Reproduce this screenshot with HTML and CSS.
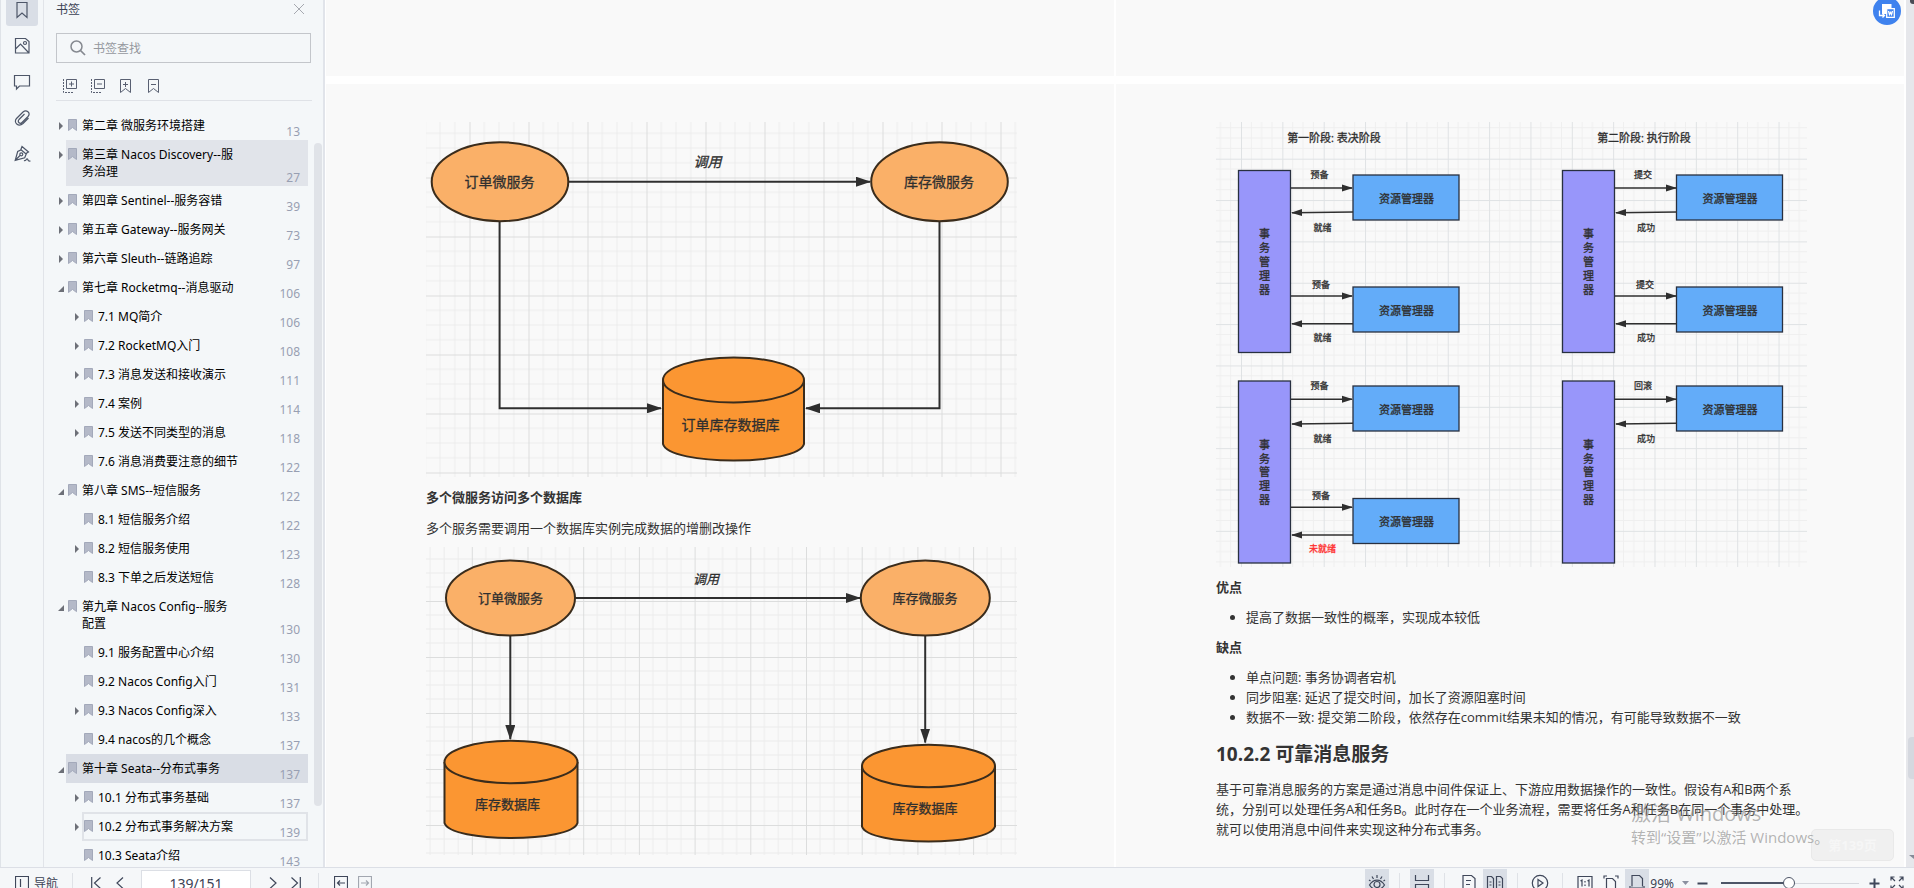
FILE: index.html
```html
<!DOCTYPE html>
<html lang="zh-CN">
<head>
<meta charset="utf-8">
<title>文档阅读器</title>
<link rel="stylesheet" href="styles.css">
</head>
<body>
<svg class="defs" aria-hidden="true">
  <defs>
    <symbol id="mark" viewBox="0 0 9 12"><path d="M.5.5h8v11L4.500 8.500.5 11.500z" fill="#b4b9c8" stroke="#a3a9ba"/></symbol>
    <symbol id="closed" viewBox="0 0 10 10"><path d="M3 1l4 4-4 4z" fill="#6d7078"/></symbol>
    <symbol id="open" viewBox="0 0 10 10"><path d="M8 3v6H2z" fill="#6d7078"/></symbol>
    <marker id="head" markerUnits="userSpaceOnUse" markerWidth="15" markerHeight="10" refX="14" refY="5" orient="auto"><path d="M0 0l15 5-15 5z" fill="#2f2f2f"/></marker>
    <marker id="head-s" markerUnits="userSpaceOnUse" markerWidth="11" markerHeight="8" refX="10" refY="4" orient="auto"><path d="M0 .5l11 3.500-11 3.500z" fill="#2f2f2f"/></marker>
    <pattern id="grid59" x="469.5" y="177.500" width="59" height="59" patternUnits="userSpaceOnUse"><path d="M14.750 0v59M29.500 0v59M44.250 0v59M0 14.750h59M0 29.500h59M0 44.250h59" stroke="#ececec"/><path d="M.5 0v59M0 .5h59" stroke="#dcdddd"/></pattern>
    <pattern id="grid56" x="527.500" y="601" width="55.700" height="56" patternUnits="userSpaceOnUse"><path d="M14 0v56M28 0v56M42 0v56M0 14h56M0 28h56M0 42h56" stroke="#ececec"/><path d="M.5 0v56M0 .5h56" stroke="#dcdddd"/></pattern>
    <pattern id="grid41" x="1241" y="158.700" width="41.350" height="41.350" patternUnits="userSpaceOnUse"><path d="M10.340 0v42M20.680 0v42M31 0v42M0 10.340h42M0 20.680h42M0 31h42" stroke="#efefef"/><path d="M.5 0v42M0 .5h42" stroke="#dfe2e4"/></pattern>
    <g id="manager"><rect x="1238.500" y="170.500" width="52" height="182"/><text x="1264.500" y="233.500">事</text><text x="1264.500" y="247.500">务</text><text x="1264.500" y="261">管</text><text x="1264.500" y="275">理</text><text x="1264.500" y="289">器</text></g>
    <g id="resource"><rect x="1353" y="175" width="106" height="45"/><text x="1406.500" y="198">资源管理器</text></g>
    <g id="exchange-a"><path d="M1291 188h61"/><path d="M1353 212l-61 .7"/></g>
    <g id="exchange-b"><path d="M1291 296h61"/><path d="M1353 323.700h-61"/></g>
  </defs>
</svg>
<div class="app">
  <div class="workspace">
    <nav class="rail" aria-label="面板">
      <button class="rail-btn active" aria-label="书签"><svg width="18" height="20" viewBox="0 0 18 20"><path d="M4 2.500h10v15l-5-4.500-5 4.500z"/></svg></button>
      <button class="rail-btn" aria-label="缩略图"><svg width="18" height="18" viewBox="0 0 18 18"><path d="M2.500 1.500h10l3.500 3v11.500H2.500zM2.500 12l5-5 8 8.500"/><circle cx="12" cy="6" r="1.500"/></svg></button>
      <button class="rail-btn" aria-label="批注"><svg width="18" height="18" viewBox="0 0 18 18"><path d="M1.500 2.500h15v10.500H6.500L3.500 16v-3h-2z"/></svg></button>
      <button class="rail-btn" aria-label="附件"><svg width="18" height="18" viewBox="0 0 18 18"><path d="M15.500 9L10 14.500c-4.500 4-10-1-6.500-5L10 3c3.500-3 8 1 5 4.500l-6 6c-2 2-5-.5-3-3L11.500 5"/></svg></button>
      <button class="rail-btn" aria-label="签名"><svg width="18" height="18" viewBox="0 0 18 18"><path d="M9 1.500l6.500 5.500-2 1.200-1.800 4.600-9.500 2.500L4.700 6.500l3-1.500zM2.500 15l4.500-4.500M7.700 4.500l6 5M11 15.500c2 1 2-2 3.500-1.500 1 .5-.5 2.500 3 2"/><circle cx="8.300" cy="9.300" r="1.500"/></svg></button>
    </nav>
    <aside class="panel">
      <header class="panel-head"><h2>书签</h2><button aria-label="关闭"><svg width="12" height="12" viewBox="0 0 12 12"><path d="M1 1l10 10M11 1L1 11" stroke="#a6a9b0"/></svg></button></header>
      <label class="search"><svg width="16" height="16" viewBox="0 0 16 16"><circle cx="6.500" cy="6.500" r="5.500" stroke="#858990" stroke-width="1.500"/><path d="M10.500 10.500l4.500 4.500" stroke="#858990" stroke-width="1.700"/></svg><input type="text" placeholder="书签查找" aria-label="书签查找"></label>
      <div class="tools">
        <button aria-label="展开"><svg width="16" height="16" viewBox="0 0 16 16"><path d="M4.500 1.500h10v9h-10zM9.500 3.500v5M7 6h5"/><path d="M1.500 1v13.500H11" stroke-dasharray="2 1"/></svg></button>
        <button aria-label="折叠"><svg width="16" height="16" viewBox="0 0 16 16"><path d="M4.500 1.500h10v9h-10zM7 6h5"/><path d="M1.500 1v13.500H11" stroke-dasharray="2 1"/></svg></button>
        <button aria-label="添加书签"><svg width="16" height="16" viewBox="0 0 16 16"><path d="M2.500 1.500h10v13l-5-4-5 4zM7.500 4v5M5 6.500h5"/></svg></button>
        <button aria-label="删除书签"><svg width="16" height="16" viewBox="0 0 16 16"><path d="M2.500 1.500h10v13l-5-4-5 4zM5 6.500h5"/></svg></button>
      </div>
      <div class="tree-wrap">
      <ul class="tree">
        <li><svg class="tw"><use href="#closed"/></svg><a href="#"><svg class="bm"><use href="#mark"/></svg><span>第二章 微服务环境搭建</span><i>13</i></a></li>
        <li><svg class="tw"><use href="#closed"/></svg><a class="hover" href="#"><svg class="bm"><use href="#mark"/></svg><span>第三章 Nacos Discovery--服务治理</span><i>27</i></a></li>
        <li><svg class="tw"><use href="#closed"/></svg><a href="#"><svg class="bm"><use href="#mark"/></svg><span>第四章 Sentinel--服务容错</span><i>39</i></a></li>
        <li><svg class="tw"><use href="#closed"/></svg><a href="#"><svg class="bm"><use href="#mark"/></svg><span>第五章 Gateway--服务网关</span><i>73</i></a></li>
        <li><svg class="tw"><use href="#closed"/></svg><a href="#"><svg class="bm"><use href="#mark"/></svg><span>第六章 Sleuth--链路追踪</span><i>97</i></a></li>
        <li><svg class="tw"><use href="#open"/></svg><a href="#"><svg class="bm"><use href="#mark"/></svg><span>第七章 Rocketmq--消息驱动</span><i>106</i></a></li>
        <li class="sub"><svg class="tw"><use href="#closed"/></svg><a href="#"><svg class="bm"><use href="#mark"/></svg><span>7.1 MQ简介</span><i>106</i></a></li>
        <li class="sub"><svg class="tw"><use href="#closed"/></svg><a href="#"><svg class="bm"><use href="#mark"/></svg><span>7.2 RocketMQ入门</span><i>108</i></a></li>
        <li class="sub"><svg class="tw"><use href="#closed"/></svg><a href="#"><svg class="bm"><use href="#mark"/></svg><span>7.3 消息发送和接收演示</span><i>111</i></a></li>
        <li class="sub"><svg class="tw"><use href="#closed"/></svg><a href="#"><svg class="bm"><use href="#mark"/></svg><span>7.4 案例</span><i>114</i></a></li>
        <li class="sub"><svg class="tw"><use href="#closed"/></svg><a href="#"><svg class="bm"><use href="#mark"/></svg><span>7.5 发送不同类型的消息</span><i>118</i></a></li>
        <li class="sub"><svg class="tw"></svg><a href="#"><svg class="bm"><use href="#mark"/></svg><span>7.6 消息消费要注意的细节</span><i>122</i></a></li>
        <li><svg class="tw"><use href="#open"/></svg><a href="#"><svg class="bm"><use href="#mark"/></svg><span>第八章 SMS--短信服务</span><i>122</i></a></li>
        <li class="sub"><svg class="tw"></svg><a href="#"><svg class="bm"><use href="#mark"/></svg><span>8.1 短信服务介绍</span><i>122</i></a></li>
        <li class="sub"><svg class="tw"><use href="#closed"/></svg><a href="#"><svg class="bm"><use href="#mark"/></svg><span>8.2 短信服务使用</span><i>123</i></a></li>
        <li class="sub"><svg class="tw"></svg><a href="#"><svg class="bm"><use href="#mark"/></svg><span>8.3 下单之后发送短信</span><i>128</i></a></li>
        <li><svg class="tw"><use href="#open"/></svg><a href="#"><svg class="bm"><use href="#mark"/></svg><span>第九章 Nacos Config--服务配置</span><i>130</i></a></li>
        <li class="sub"><svg class="tw"></svg><a href="#"><svg class="bm"><use href="#mark"/></svg><span>9.1 服务配置中心介绍</span><i>130</i></a></li>
        <li class="sub"><svg class="tw"></svg><a href="#"><svg class="bm"><use href="#mark"/></svg><span>9.2 Nacos Config入门</span><i>131</i></a></li>
        <li class="sub"><svg class="tw"><use href="#closed"/></svg><a href="#"><svg class="bm"><use href="#mark"/></svg><span>9.3 Nacos Config深入</span><i>133</i></a></li>
        <li class="sub"><svg class="tw"></svg><a href="#"><svg class="bm"><use href="#mark"/></svg><span>9.4 nacos的几个概念</span><i>137</i></a></li>
        <li><svg class="tw"><use href="#open"/></svg><a class="current" href="#"><svg class="bm"><use href="#mark"/></svg><span>第十章 Seata--分布式事务</span><i>137</i></a></li>
        <li class="sub"><svg class="tw"><use href="#closed"/></svg><a href="#"><svg class="bm"><use href="#mark"/></svg><span>10.1 分布式事务基础</span><i>137</i></a></li>
        <li class="sub"><svg class="tw"><use href="#closed"/></svg><a class="focus" href="#"><svg class="bm"><use href="#mark"/></svg><span>10.2 分布式事务解决方案</span><i>139</i></a></li>
        <li class="sub"><svg class="tw"></svg><a href="#"><svg class="bm"><use href="#mark"/></svg><span>10.3 Seata介绍</span><i>143</i></a></li>
      </ul>
      <div class="tree-bar"></div>
      </div>
    </aside>
    <main class="viewer">
      <div class="page previous"></div><div class="page previous"></div>
      <article class="page">
        <svg class="figure" viewBox="426 122 591 355" role="img" aria-label="多个微服务访问一个数据库">
          <rect x="426" y="122" width="591" height="355" fill="url(#grid59)"/>
          <g class="line"><path d="M568 181.700h302"/><path d="M499.600 221v187.300H661"/><path d="M939.500 221v187.300H806"/></g>
          <g class="service"><ellipse cx="500" cy="181.700" rx="68.300" ry="39.500"/><ellipse cx="939.500" cy="181.700" rx="68.300" ry="39.500"/></g>
          <g class="store"><path d="M663 380v64c6 22 135 22 141 0v-64"/><ellipse cx="733.500" cy="380" rx="70.500" ry="22.500"/></g>
          <g class="label"><text x="499.500" y="181">订单微服务</text><text x="939" y="181">库存微服务</text><text x="730.500" y="424">订单库存数据库</text><text class="call" x="707.500" y="161">调用</text></g>
        </svg>
        <h4>多个微服务访问多个数据库</h4>
        <p class="after-title">多个服务需要调用一个数据库实例完成数据的增删改操作</p>
        <svg class="figure second" viewBox="426 547 591 308" role="img" aria-label="多个微服务访问多个数据库">
          <rect x="426" y="547" width="591" height="308" fill="url(#grid56)"/>
          <g class="line"><path d="M575 598h285"/><path d="M510.300 635v104"/><path d="M925.200 635v107.500"/></g>
          <g class="service"><ellipse cx="510.500" cy="598" rx="64.500" ry="37.500"/><ellipse cx="925.300" cy="598" rx="64.500" ry="37.500"/></g>
          <g class="store"><path d="M444.500 762v61c6 20 127 20 133 0v-61"/><ellipse cx="511" cy="762" rx="66.500" ry="21.300"/><path d="M862 766v60.500c6 20 127 20 133 0V766"/><ellipse cx="928.500" cy="766" rx="66.500" ry="21.300"/></g>
          <g class="label small"><text x="510.500" y="598">订单微服务</text><text x="925" y="598">库存微服务</text><text x="507.500" y="804">库存数据库</text><text x="925" y="808">库存数据库</text><text class="call" x="706" y="579">调用</text></g>
        </svg>
      </article>
      <article class="page">
        <svg class="figure" viewBox="1216 122 591 445" role="img" aria-label="两阶段提交">
          <rect x="1216" y="122" width="591" height="445" fill="url(#grid41)"/>
          <g class="phase"><text x="1334" y="137.500">第一阶段: 表决阶段</text><text x="1644" y="137.500">第二阶段: 执行阶段</text></g>
          <g class="manager"><use href="#manager"/><use href="#manager" y="210.500"/><use href="#manager" x="324"/><use href="#manager" x="324" y="210.500"/></g>
          <g class="resource"><use href="#resource"/><use href="#resource" y="112"/><use href="#resource" y="211"/><use href="#resource" y="323.500"/><use href="#resource" x="323.500"/><use href="#resource" x="323.500" y="112"/><use href="#resource" x="323.500" y="211"/></g>
          <g class="line thin"><use href="#exchange-a"/><use href="#exchange-b"/><use href="#exchange-a" y="211.300"/><use href="#exchange-b" y="211.300"/><use href="#exchange-a" x="324"/><use href="#exchange-b" x="324"/><use href="#exchange-a" x="324" y="211.300"/></g>
          <g class="message"><text x="1319.500" y="174.500">预备</text><text x="1322.500" y="227.500">就绪</text><text x="1321" y="284">预备</text><text x="1322.500" y="337">就绪</text><text x="1319.500" y="385.500">预备</text><text x="1322.500" y="438.500">就绪</text><text x="1321" y="495">预备</text><text class="alert" x="1322.500" y="548.500">未就绪</text><text x="1643" y="174.500">提交</text><text x="1646" y="227.500">成功</text><text x="1645" y="284">提交</text><text x="1646" y="337">成功</text><text x="1643" y="385.500">回滚</text><text x="1646" y="438.500">成功</text></g>
        </svg>
        <h4>优点</h4>
        <ul><li>提高了数据一致性的概率，实现成本较低</li></ul>
        <h4>缺点</h4>
        <ul><li>单点问题: 事务协调者宕机</li><li>同步阻塞: 延迟了提交时间，加长了资源阻塞时间</li><li>数据不一致: 提交第二阶段，依然存在commit结果未知的情况，有可能导致数据不一致</li></ul>
        <h3>10.2.2 可靠消息服务</h3>
        <p>基于可靠消息服务的方案是通过消息中间件保证上、下游应用数据操作的一致性。假设有A和B两个系<br>统，分别可以处理任务A和任务B。此时存在一个业务流程，需要将任务A和任务B在同一个事务中处理。<br>就可以使用消息中间件来实现这种分布式事务。</p>
      </article>
      <button class="convert" aria-label="转为Word"><svg width="18" height="18" viewBox="0 0 18 18"><path d="M4 2h9.500v4H8.500v6H4z" fill="#fff"/><path d="M8.700 6.700h7.600v8.600H8.700zM10.500 9l1 3.500 1-2 1 2 1-3.500M1.500 8.500v5H6M4.500 11.500l2 2-2 2" stroke="#fff" stroke-width="1.300"/></svg></button>
      <div class="ghost">第139页</div>
      <div class="activate"><b>激活 Windows</b><span>转到“设置”以激活 Windows。</span></div>
    </main>
    <div class="scroll"><span class="scroll-cap"></span><span class="scroll-thumb"></span><svg width="8" height="6" viewBox="0 0 8 6"><path d="M3 0h5v4z" fill="#868b98"/></svg></div>
  </div>
  <footer class="status">
    <div class="status-row">
      <button class="nav"><svg width="14" height="14" viewBox="0 0 14 14"><path d="M.5.500h13v13H.5zM5.500 3v8"/></svg>导航</button>
      <span class="rule"></span>
      <button class="first" aria-label="首页"><svg width="10" height="12" viewBox="0 0 10 12"><path d="M.7 0v12M9.500.5L3.500 6l6 5.500"/></svg></button>
      <button class="prev" aria-label="上一页"><svg width="8" height="12" viewBox="0 0 8 12"><path d="M7 .5L1 6l6 5.500"/></svg></button>
      <input class="page-no" type="text" value="139/151" aria-label="页码">
      <button class="next" aria-label="下一页"><svg width="8" height="12" viewBox="0 0 8 12"><path d="M1 .5L7 6l-6 5.500"/></svg></button>
      <button class="last" aria-label="末页"><svg width="10" height="12" viewBox="0 0 10 12"><path d="M9.300 0v12M.5.5L6.500 6l-6 5.500"/></svg></button>
      <span class="rule"></span>
      <button class="back" aria-label="后退"><svg width="14" height="14" viewBox="0 0 14 14"><path d="M.5.500h13v13H.5zM3.500 7h7.500M6 4.500L3.500 7 6 9.500"/></svg></button>
      <button class="forward" aria-label="前进"><svg width="14" height="14" viewBox="0 0 14 14"><path d="M.5.500h13v13H.5zM3 7h7.500M8 4.500L10.500 7 8 9.500"/></svg></button>
      <div class="views">
        <button class="on" aria-label="护眼"><svg width="18" height="18" viewBox="0 0 18 18"><path d="M1.500 11c4-6.500 11-6.500 15 0-4 6-11 6-15 0zM9 1v3M4 2.500l1.500 2.500M14 2.500l-1.500 2.500M1 6l1.500 1M17 6l-1.500 1"/><circle cx="9" cy="10.500" r="3"/></svg></button>
        <span class="rule"></span>
        <button class="on" aria-label="连续"><svg width="18" height="18" viewBox="0 0 18 18"><path d="M2.500 1v5.500h13V1M2.500 17v-6.500h13V17"/></svg></button>
        <span class="rule"></span>
        <div class="pair"><button aria-label="单页"><svg width="18" height="18" viewBox="0 0 18 18"><path d="M3 1.500h8.500l3.500 3V16.500H3zM6 6.500h5M6 10.500h4"/></svg></button><button class="on" aria-label="双页"><svg width="18" height="18" viewBox="0 0 18 18"><path d="M1.500 2.500h4l2 2v12h-6zM10.500 2.500h4l2 2v12h-6zM3.500 8h2M3.500 11h2M12.500 8h2M12.500 11h2"/></svg></button></div>
        <span class="rule"></span>
        <button aria-label="播放"><svg width="18" height="18" viewBox="0 0 18 18"><circle cx="9" cy="9" r="7.700"/><path d="M7 5.500l5 3.500-5 3.500z"/></svg></button>
        <span class="rule"></span>
        <div class="fit"><button aria-label="实际大小"><svg width="18" height="18" viewBox="0 0 18 18"><path d="M2 2.500h14v13H2zM4.500 7l1.500-1v6.500M11.500 7l1.500-1v6.500M9 7v1.500M9 10.500V12"/></svg></button><button aria-label="适合页面"><svg width="18" height="18" viewBox="0 0 18 18"><path d="M4.500 4.500h6l3 3v8h-9zM2 4.500V2h3M16 4.500V2h-3M2 14v2.500h2M16 14v2.500h-2"/></svg></button><button class="on" aria-label="适合宽度"><svg width="18" height="18" viewBox="0 0 18 18"><path d="M4 12.500v-11h7.500l3 3v8M2 12v4M16 12v4M3 14h12"/></svg></button></div>
        <button class="zoom">99%<svg width="8" height="5" viewBox="0 0 8 5"><path d="M0 0h7L3.500 4z" fill="#8b90a0"/></svg></button>
        <button class="step" aria-label="缩小"><svg width="11" height="11" viewBox="0 0 11 11"><path d="M.5 5.500h10" stroke-width="2"/></svg></button>
        <input class="slider" type="range" min="0" max="100" value="49" aria-label="缩放">
        <button class="step" aria-label="放大"><svg width="11" height="11" viewBox="0 0 11 11"><path d="M.5 5.500h10M5.500.5v10" stroke-width="2"/></svg></button>
        <button class="full" aria-label="全屏"><svg width="14" height="14" viewBox="0 0 14 14"><path d="M1 4.500V1h3.500M1 1l4 4M13 4.500V1H9.500M13 1L9 5M1 9.500V13h3.500M1 13l4-4M13 9.500V13H9.500M13 13L9 9"/></svg></button>
      </div>
    </div>
  </footer>
</div>
</body>
</html>
```

FILE: styles.css
```css
* { box-sizing: border-box; }
body { margin: 0; font-family: "Noto Sans", "Noto Sans CJK SC", sans-serif; font-size: 12px; color: #000; }
button { border: 0; padding: 0; background: none; font: inherit; color: inherit; display: flex; align-items: center; justify-content: center; }
svg { display: block; fill: none; stroke-width: 1; flex: none; }
h2, h3, h4, p, ul { margin: 0; padding: 0; }
.defs { position: absolute; width: 0; height: 0; }

.app { height: 100vh; display: flex; flex-direction: column; overflow: hidden; background: #f4f7f9; }
.workspace { flex: 1; min-height: 0; display: flex; }

.rail { width: 44px; flex: none; display: flex; flex-direction: column; align-items: center; gap: 4px; border-left: 1px solid #dfe3e8; border-right: 1px solid #e1e4e9; }
.rail-btn { width: 32px; height: 32px; border-radius: 3px; flex: none; }
.rail-btn svg, .tools svg { stroke: #4d5668; stroke-width: 1.2; }
.rail-btn.active { background: #d9dee6; margin-top: -6px; }

.panel { width: 281px; flex: none; display: flex; flex-direction: column; padding-left: 12px; border-right: 2px solid #e1e4ea; }
.panel-head { display: flex; justify-content: space-between; align-items: center; height: 18px; padding-right: 18px; }
.panel-head h2 { font-size: 12px; font-weight: 400; color: #3b4254; }
.search { display: flex; align-items: center; gap: 7px; height: 30px; margin: 15px 12px 0 0; padding-left: 13px; border: 1px solid #c3c6cb; }
.search input { border: 0; background: none; outline: 0; font: inherit; width: 180px; padding: 0; }
.search input::placeholder { color: #95989e; }
.tools { display: flex; gap: 12px; padding: 15px 0 6px 6px; margin-right: 11px; border-bottom: 1px solid #dfe2e7; }
.tools svg { stroke: #596072; stroke-width: 1; }
.tree-wrap { flex: 1; min-height: 0; display: flex; overflow: hidden; padding-top: 10px; }
.tree { list-style: none; width: 252px; flex: none; line-height: 17px; }
.tree li { display: flex; }
.tree .sub { padding-left: 16px; }
.tw { width: 10px; height: 10px; margin-top: 10px; }
.tree a { flex: 1; display: flex; min-height: 29px; padding: 6px 8px 6px 2px; color: inherit; text-decoration: none; }
.bm { width: 9px; height: 12px; margin-top: 2px; }
.tree span { flex: 1; margin-left: 5px; }
.tree i { width: 63px; align-self: flex-end; height: 11px; text-align: right; font-style: normal; color: #989fb2; }
.tree .sub i { width: 50px; }
.tree .hover { background: #e1e4ea; }
.tree .current { background: #d9dde5; }
.tree .focus { box-shadow: inset 0 0 0 2px #e0e3e8; }
.tree-bar { width: 8px; height: 663px; margin: 32px 0 0 6px; border-radius: 4px; background: #e0e3e8; flex: none; }

.viewer { flex: 1; position: relative; display: grid; grid-template-columns: 1fr 1fr; grid-template-rows: 76px 1fr; gap: 8px 2px; padding: 0 2px 0 1px; overflow: hidden; background: #fff; color: #333; font-family: "Open Sans", "Noto Sans CJK SC", sans-serif; font-size: 13px; line-height: 20px; }
.page { background: #f9f9f9; padding: 38px 97px 0 100px; min-width: 0; min-height: 0; }
.page.previous { padding: 0; }
.figure { width: 100%; height: auto; }
.page h4 { font-size: 13px; font-weight: 700; margin-top: 10px; }
.page .after-title { margin-top: 11px; }
.page .second { margin-top: 9px; }
.page ul { padding-left: 30px; margin-top: 10px; }
.page h3 { font-size: 19px; line-height: 28px; font-weight: 700; margin: 13px 0 11px; }
.page p { white-space: nowrap; }
text { text-anchor: middle; dominant-baseline: central; stroke: #2f2f2f; stroke-width: .3; fill: #2f2f2f; }
.line { stroke: #2f2f2f; stroke-width: 2; }
.line path { marker-end: url(#head); }
.thin { stroke-width: 1.4; }
#exchange-a path, #exchange-b path { marker-end: url(#head-s); }
marker path { stroke: none; }
.service { fill: #fab068; stroke: #3a2c1c; stroke-width: 2; }
.store { fill: #fb9632; stroke: #3a2c1c; stroke-width: 2; }
.label { font-size: 14px; }
.label.small { font-size: 13px; }
.call { font-style: italic; }
.phase { font-size: 11px; }
.manager, .resource { font-size: 11px; stroke: #283040; stroke-width: 1.3; }
.manager { fill: #9896fa; }
.resource { fill: #63acf9; }
.message { font-size: 9px; }
.alert { fill: #ff2d2d; stroke: #ff2d2d; }

.convert { position: absolute; top: -3px; right: 5px; width: 28px; height: 28px; border-radius: 50%; background: #3f82ee; }
.activate { position: absolute; left: 1306px; top: 801px; display: flex; flex-direction: column; color: rgba(140, 140, 140, .65); white-space: nowrap; }
.activate b { font-size: 20px; line-height: 26px; font-weight: 400; }
.activate span { font-size: 15px; line-height: 20px; }
.ghost { position: absolute; right: 12px; bottom: 6px; width: 83px; height: 32px; display: flex; align-items: center; justify-content: center; border-radius: 5px; border: 1px solid #e9e9e9; background: #f0f0f0; color: #f6f6f6; font-weight: 700; }

.scroll { width: 8px; flex: none; display: flex; flex-direction: column; background: #e6e7eb; }
.scroll-cap { width: 4px; height: 4px; margin-left: 4px; background: #4a4c55; border-radius: 0 0 0 3px; }
.scroll-thumb { height: 42px; margin: auto 0 76px 2px; background: #d5d8df; border-radius: 4px 0 0 4px; }
.scroll svg { margin-bottom: 6px; }

.status { flex: none; height: 21px; border-top: 1px solid #dcdfe6; background: #f5f7f9; overflow: hidden; color: #3b4254; }
.status-row { height: 30px; display: flex; align-items: center; padding: 0 10px 0 15px; }
.status svg { stroke: #3f475a; stroke-width: 1.2; }
.rule { width: 1px; height: 20px; background: #dfe2e7; }
.nav { gap: 5px; margin-right: 14px; }
.first { margin-left: 18px; }
.prev { margin-left: 15px; }
.page-no { width: 110px; height: 26px; margin: 0 18px 0 17px; border: 1px solid #dcdfe5; background: #fff; text-align: center; font: inherit; font-size: 14px; color: inherit; padding: 0; }
.last { margin: 0 17px 0 14px; }
.back { margin-left: 15px; }
.forward { margin-left: 10px; opacity: .45; }
.views { margin-left: auto; display: flex; align-items: center; gap: 10px; }
.views .on { background: #d9dee6; }
.views button { height: 28px; min-width: 24px; }
.pair { display: flex; margin-left: 2px; }
.pair button:first-child { margin-right: 2px; }
.fit { display: flex; gap: 2px; }
.views .zoom { font-size: 12px; gap: 8px; margin: 0 -3px 0 -9px; }
.views .step, .views .full { min-width: 11px; }
.views .zoom svg { stroke: none; }
.slider { appearance: none; width: 138px; height: 12px; margin: 0 0 0 3px; background: linear-gradient(#4d5567, #4d5567) 0 50% / 50% 2px no-repeat, linear-gradient(#d5d8de, #d5d8de) 0 50% / 100% 1px no-repeat; }
.slider::-webkit-slider-thumb { appearance: none; width: 12px; height: 12px; border: 1px solid #4d5567; border-radius: 50%; background: #fff; }
```
